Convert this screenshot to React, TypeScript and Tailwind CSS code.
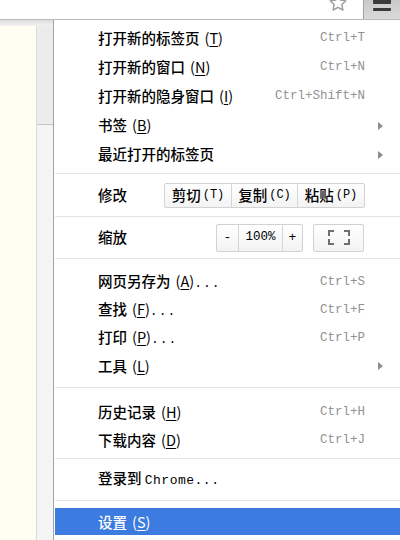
import type { ReactNode } from "react";

const cjk = "font-['Noto_Sans_CJK_SC','Noto_Sans',sans-serif] font-medium";
const mono = "font-['Liberation_Mono','DejaVu_Sans_Mono',monospace] font-normal";

type Entry = {
  label: string;
  key?: string;
  dots?: boolean;
  shortcut?: string;
  arrow?: boolean;
};

function Mnemonic({ k }: { k: string }) {
  return (
    <span className="ml-[5px] font-normal">
      (<span className="underline underline-offset-2">{k}</span>)
    </span>
  );
}

function Item({ e, h = "h-[28px]" }: { e: Entry; h?: string }) {
  return (
    <div className={`flex items-center ${h} pl-[44px]`}>
      <span className={`${cjk} text-[14.5px] leading-none text-black`}>
        {e.label}
        {e.key && <Mnemonic k={e.key} />}
        {e.dots && <span className={`${mono} text-[13px] tracking-[1px]`}>...</span>}
      </span>
      <span className={`${mono} ml-auto text-[12.5px] leading-none text-[#929292]`}>
        {e.shortcut}
      </span>
      <div className="flex w-[35px] items-center pl-[13px]">
        {e.arrow && (
          <div className="h-0 w-0 border-y-[4px] border-l-[5px] border-y-transparent border-l-[#8c8c8c]" />
        )}
      </div>
    </div>
  );
}

function Sep() {
  return <div className="ml-[1px] h-px bg-[#e4e4e4]" />;
}

function Seg({ children, w, last }: { children: ReactNode; w: string; last?: boolean }) {
  return (
    <div
      className={`flex h-full ${w} items-center justify-center ${
        last ? "" : "border-r border-[#d6d6d6]"
      }`}
    >
      {children}
    </div>
  );
}

const top: Entry[] = [
  { label: "打开新的标签页", key: "T", shortcut: "Ctrl+T" },
  { label: "打开新的窗口", key: "N", shortcut: "Ctrl+N" },
  { label: "打开新的隐身窗口", key: "I", shortcut: "Ctrl+Shift+N" },
  { label: "书签", key: "B", arrow: true },
  { label: "最近打开的标签页", arrow: true },
];

const page: Entry[] = [
  { label: "网页另存为", key: "A", dots: true, shortcut: "Ctrl+S" },
  { label: "查找", key: "F", dots: true, shortcut: "Ctrl+F" },
  { label: "打印", key: "P", dots: true, shortcut: "Ctrl+P" },
  { label: "工具", key: "L", arrow: true },
];

const history: Entry[] = [
  { label: "历史记录", key: "H", shortcut: "Ctrl+H" },
  { label: "下载内容", key: "D", shortcut: "Ctrl+J" },
];

export default function App() {
  return (
    <div className="relative h-[540px] w-[400px] overflow-hidden bg-white">
      {/* toolbar strip */}
      <div className="flex h-[20px] items-start justify-end overflow-hidden border-b border-[#b9b9b9] bg-white">
        <svg
          width="20"
          height="20"
          viewBox="0 0 24 24"
          className="mt-[-7px] mr-[15px]"
          fill="none"
          stroke="#9a9a9a"
          strokeWidth="1.6"
          strokeLinejoin="round"
        >
          <path d="M12 2.5l2.9 6.1 6.6.8-4.9 4.5 1.3 6.6L12 17.2l-5.9 3.3 1.3-6.6-4.9-4.5 6.6-.8z" />
        </svg>
        <div className="flex h-[19px] w-[37px] flex-col items-center gap-[4px] border-l border-[#a2a2a2] bg-gradient-to-b from-[#c9c9c9] to-[#dadada]">
          <div className="h-[4px] w-[18px] rounded-b-[1px] bg-[#3a3a3a]" />
          <div className="h-[3px] w-[18px] rounded-[1px] bg-[#3a3a3a]" />
        </div>
      </div>

      <div className="flex h-[520px]">
        {/* page behind the menu */}
        <div className="flex w-[53px] flex-col">
          <div className="h-[6px] bg-gradient-to-b from-[#dcdcdc] to-[#f3f3f3]" />
          <div className="flex flex-1">
            <div className="w-[36px] bg-[#fffef3]" />
            <div className="flex flex-1 flex-col border-l border-[#dadada] bg-[#f5f5f5]">
              <div className="h-[99px] border-b border-[#c6c6c6] bg-[#ececec]" />
            </div>
          </div>
        </div>

        {/* menu */}
        <div className="flex-1 border-l border-[#a3a3a3] bg-white">
          <div className="pt-[4px] pb-[4px]">
            {top.map((e) => (
              <Item key={e.label} e={e} h="h-[29px]" />
            ))}
          </div>
          <Sep />

          <div className={`flex h-[42px] items-center pl-[44px] ${cjk} text-[14.5px] leading-none text-black`}>
            <span className="w-[66px]">修改</span>
            <div className="flex h-[25px] w-[201px] rounded-[2px] border border-[#d2d2d2] bg-gradient-to-b from-white to-[#f3f3f3]">
              <Seg w="w-[67px]">
                剪切<span className={`${mono} ml-[2px] text-[12px]`}>(T)</span>
              </Seg>
              <Seg w="w-[66px]">
                复制<span className={`${mono} ml-[2px] text-[12px]`}>(C)</span>
              </Seg>
              <Seg w="flex-1" last>
                粘贴<span className={`${mono} ml-[2px] text-[12px]`}>(P)</span>
              </Seg>
            </div>
          </div>
          <Sep />

          <div className={`flex h-[41px] items-center pl-[44px] ${cjk} text-[14.5px] leading-none text-black`}>
            <span className="w-[118px]">缩放</span>
            <div className="flex h-[28px] w-[87px] rounded-[2px] border border-[#d2d2d2] bg-gradient-to-b from-white to-[#f3f3f3]">
              <Seg w="w-[22px]">
                <span className={`${mono} text-[13px]`}>-</span>
              </Seg>
              <Seg w="w-[44px]">
                <span className={`${mono} text-[12.5px]`}>100%</span>
              </Seg>
              <Seg w="flex-1" last>
                <span className={`${mono} text-[13px]`}>+</span>
              </Seg>
            </div>
            <div className="ml-[10px] flex h-[28px] w-[51px] items-center justify-center rounded-[2px] border border-[#d2d2d2] bg-gradient-to-b from-white to-[#f3f3f3]">
              <svg width="22" height="15" viewBox="0 0 22 15" fill="none" stroke="#6f6f6f" strokeWidth="2">
                <path d="M1 6V1h5M16 1h5v5M21 9v5h-5M6 14H1V9" />
              </svg>
            </div>
          </div>
          <Sep />

          <div className="pt-[9px] pb-[7px]">
            {page.map((e) => (
              <Item key={e.label} e={e} />
            ))}
          </div>
          <Sep />

          <div className="pt-[10px] pb-[4px]">
            {history.map((e) => (
              <Item key={e.label} e={e} />
            ))}
          </div>
          <Sep />

          <div className="flex h-[41px] items-center pl-[44px] pb-[1px]">
            <span className={`${cjk} text-[14.5px] leading-none text-black`}>
              登录到 <span className={`${mono} text-[13px] tracking-[0.5px]`}>Chrome...</span>
            </span>
          </div>
          <Sep />

          <div className="pt-[7px]">
            <div className={`ml-[1px] flex h-[27px] items-center bg-[#3c7be0] pl-[43px] pt-[2px] ${cjk} text-[14.5px] leading-none text-white`}>
              设置
              <Mnemonic k="S" />
            </div>
          </div>
        </div>
      </div>
    </div>
  );
}
